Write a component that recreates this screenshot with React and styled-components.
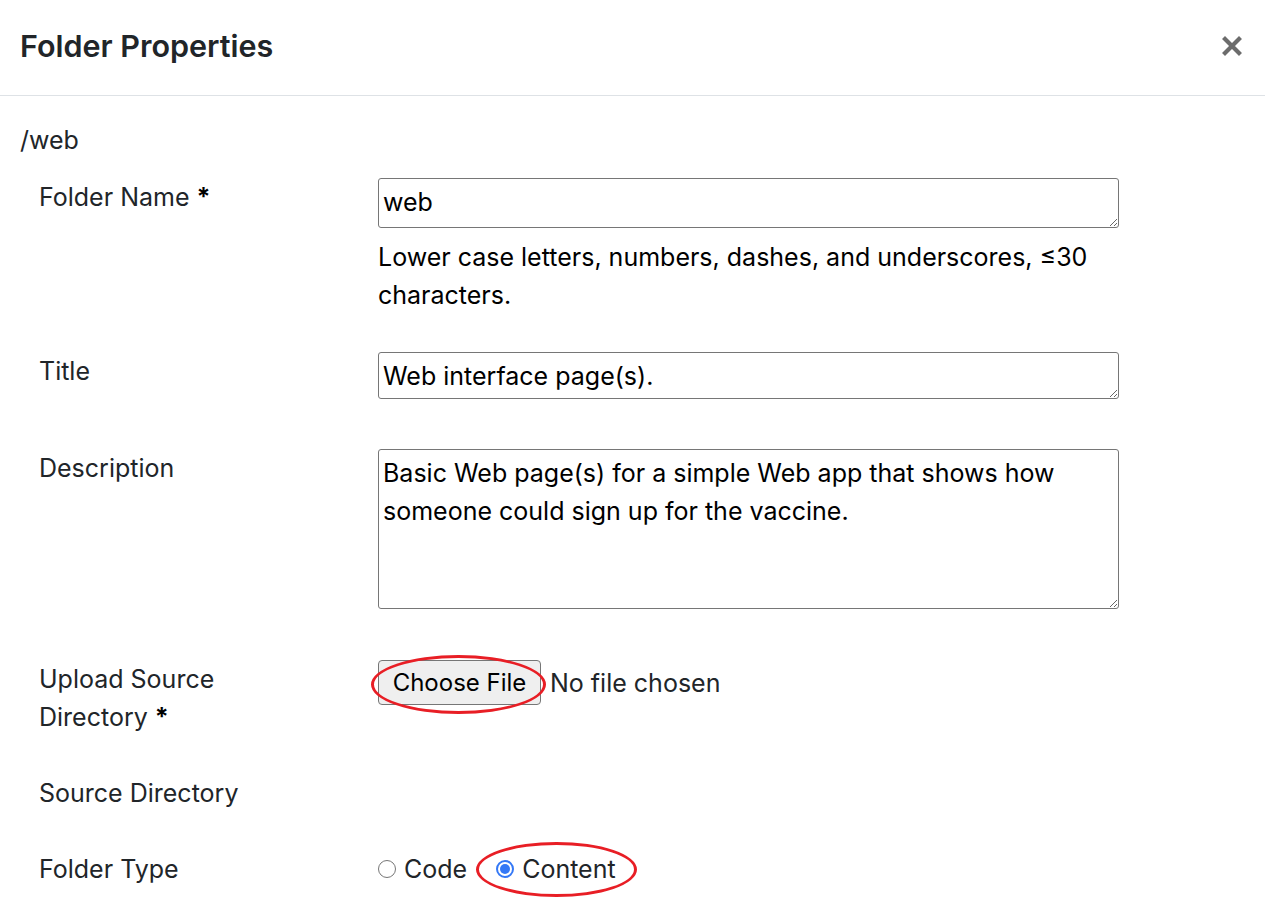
import React from "react";
import styled, { createGlobalStyle } from "styled-components";

const Global = createGlobalStyle`
  html, body { margin: 0; padding: 0; background: #fff; }
  body { font-family: Inter, "Noto Sans", sans-serif; color: #212529; }
  * { box-sizing: border-box; }
`;

const Modal = styled.div`
  width: 1265px;
  min-height: 919px;
  background: #fff;
`;

const Header = styled.div`
  height: 96px;
  display: flex;
  align-items: center;
  justify-content: space-between;
  padding: 0 20px 4px 20px;
  border-bottom: 1px solid #dee2e6;
`;

const Title = styled.h5`
  margin: 0;
  font-size: 30.5px;
  font-weight: 600;
  line-height: 36px;
  color: #212529;
`;

const Close = styled.button`
  border: 0;
  background: none;
  padding: 0;
  margin-right: 3px;
  width: 20px;
  height: 20px;
  display: flex;
  cursor: pointer;
`;

const Body = styled.div`
  padding: 25px 20px 20px 20px;
`;

const Path = styled.div`
  font-size: 25px;
  line-height: 38px;
  margin-bottom: 19px;
`;

const Row = styled.div`
  display: grid;
  grid-template-columns: 339px 741px;
  margin-bottom: 38px;
  padding-left: 19px;
`;

const Label = styled.div`
  font-size: 25px;
  line-height: 38px;
  color: #212529;
  padding-right: 50px;
`;

const Req = styled.span`
  font-weight: 700;
  color: #000;
  margin-left: 7px;
`;

const Field = styled.div`
  display: flex;
  flex-direction: column;
`;

const Area = styled.textarea`
  display: block;
  width: 741px;
  height: ${(p) => p.$h}px;
  margin: 0 0 ${(p) => p.$mb}px 0;
  padding: 4px 4px 2px 4px;
  border: 1px solid #767676;
  border-radius: 3px;
  font-family: Inter, "Noto Sans", sans-serif;
  font-size: 25px;
  line-height: 38px;
  color: #000;
  resize: vertical;
  background: #fff;
  overflow: hidden;
`;

const Help = styled.div`
  font-size: 25px;
  line-height: 38px;
  color: #000;
`;

const FileLine = styled.div`
  display: flex;
  align-items: center;
  height: 45px;
  gap: 9px;
`;

const Ring = styled.span`
  position: relative;
  display: inline-flex;
`;

const Ellipse = styled.span`
  position: absolute;
  left: ${(p) => p.$l}px;
  top: ${(p) => p.$t}px;
  width: ${(p) => p.$w}px;
  height: ${(p) => p.$hh}px;
  border: 3.5px solid #e81e25;
  border-radius: 50%;
  pointer-events: none;
`;

const FileButton = styled.span`
  display: inline-flex;
  align-items: center;
  justify-content: center;
  width: 163px;
  height: 45px;
  background: #efefef;
  border: 1px solid #767676;
  border-radius: 4px;
  font-size: 24px;
  color: #000;
`;

const FileText = styled.span`
  font-size: 25px;
  color: #212529;
`;

const Radios = styled.div`
  display: flex;
  align-items: center;
  height: 38px;
  gap: 29px;
`;

const RadioLabel = styled.label`
  display: inline-flex;
  align-items: center;
  gap: 8px;
  font-size: 25px;
  line-height: 30px;
  color: #212529;
`;

const Dot = styled.span`
  width: 18px;
  height: 18px;
  border-radius: 50%;
  border: ${(p) => (p.$on ? "2px solid #3478f6" : "1px solid #767676")};
  background: #fff;
  display: inline-flex;
  align-items: center;
  justify-content: center;
  &::after {
    content: "";
    display: ${(p) => (p.$on ? "block" : "none")};
    width: 10px;
    height: 10px;
    border-radius: 50%;
    background: #3478f6;
  }
`;

export default function App() {
  return (
    <>
      <Global />
      <Modal>
        <Header>
          <Title>Folder Properties</Title>
          <Close aria-label="Close">
            <svg width="20" height="20" viewBox="0 0 20 20">
              <path d="M3 3 L17 17 M17 3 L3 17" stroke="#6c6c6c" strokeWidth="4.2" strokeLinecap="square" />
            </svg>
          </Close>
        </Header>
        <Body>
          <Path>/web</Path>
          <Row>
            <Label>
              Folder Name<Req>*</Req>
            </Label>
            <Field>
              <Area $h={50} $mb={10} defaultValue="web" />
              <Help>Lower case letters, numbers, dashes, and underscores, ≤30 characters.</Help>
            </Field>
          </Row>
          <Row>
            <Label>Title</Label>
            <Field>
              <Area $h={47} $mb={12} defaultValue="Web interface page(s)." />
            </Field>
          </Row>
          <Row>
            <Label>Description</Label>
            <Field>
              <Area
                $h={160}
                $mb={13}
                defaultValue="Basic Web page(s) for a simple Web app that shows how someone could sign up for the vaccine."
              />
            </Field>
          </Row>
          <Row>
            <Label>
              Upload Source Directory<Req>*</Req>
            </Label>
            <Field>
              <FileLine>
                <Ring>
                  <FileButton>Choose File</FileButton>
                  <Ellipse $l={-7} $t={-5} $w={175} $hh={59} />
                </Ring>
                <FileText>No file chosen</FileText>
              </FileLine>
            </Field>
          </Row>
          <Row>
            <Label>Source Directory</Label>
            <Field />
          </Row>
          <Row>
            <Label>Folder Type</Label>
            <Field>
              <Radios>
                <RadioLabel>
                  <Dot />
                  Code
                </RadioLabel>
                <Ring>
                  <RadioLabel>
                    <Dot $on />
                    Content
                  </RadioLabel>
                  <Ellipse $l={-20} $t={-12} $w={161} $hh={55} />
                </Ring>
              </Radios>
            </Field>
          </Row>
        </Body>
      </Modal>
    </>
  );
}
